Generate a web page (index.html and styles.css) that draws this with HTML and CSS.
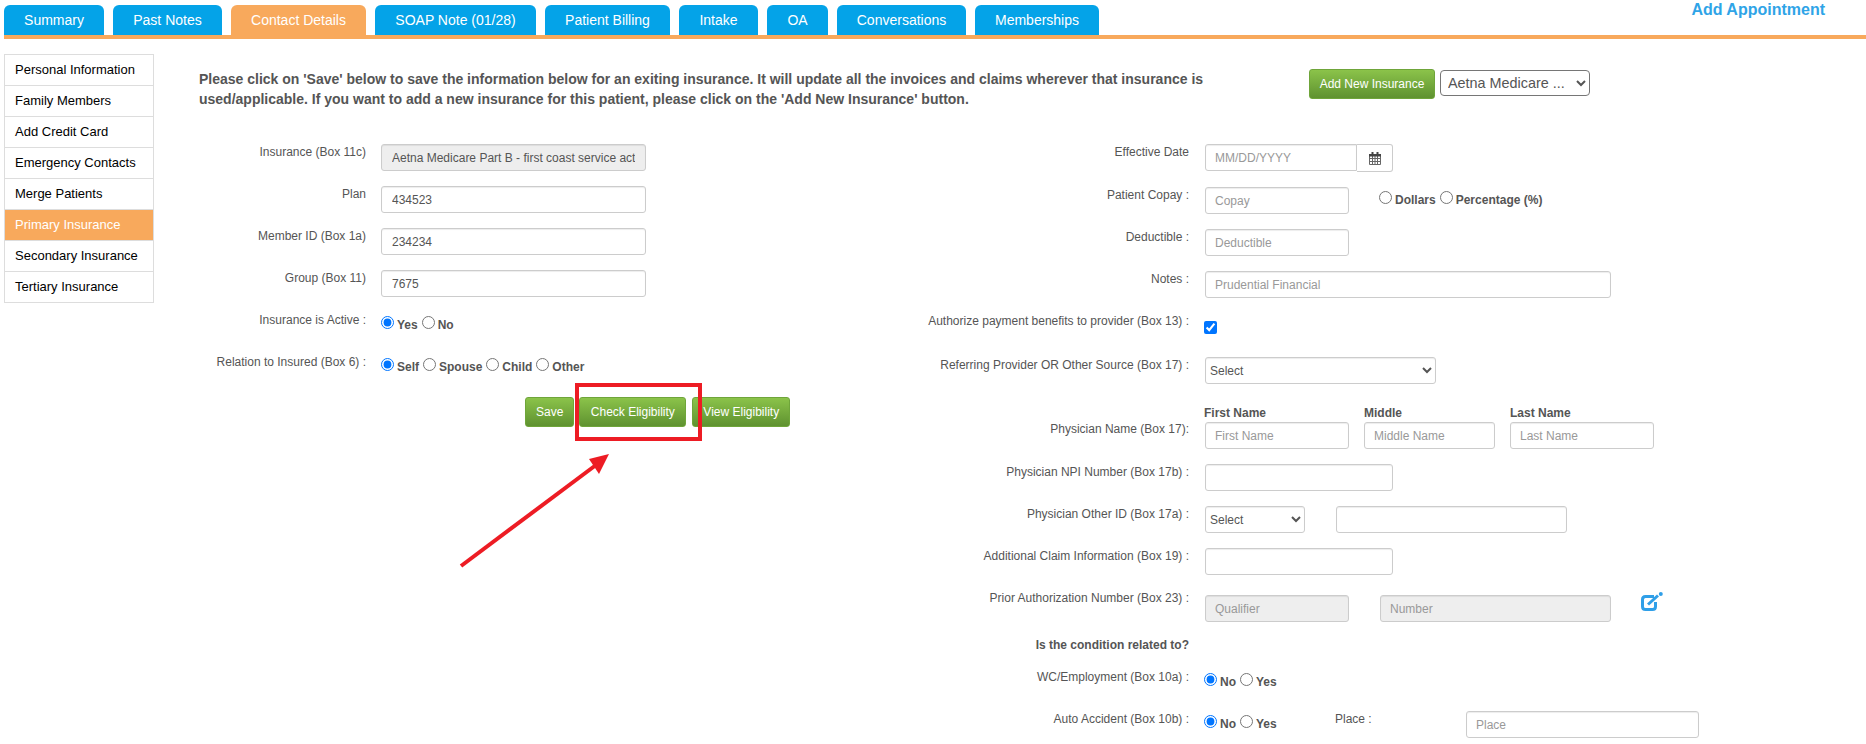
FILE: index.html
```html
<!DOCTYPE html>
<html lang="en">
<head>
    <meta charset="UTF-8">
    <title>Primary Insurance</title>
    <link rel="stylesheet" href="styles.css">
</head>
<body>
    <div class="top-bar">
        <div class="tabs">
            <a class="tab">Summary</a>
            <a class="tab">Past Notes</a>
            <a class="tab active">Contact Details</a>
            <a class="tab">SOAP Note (01/28)</a>
            <a class="tab">Patient Billing</a>
            <a class="tab">Intake</a>
            <a class="tab">OA</a>
            <a class="tab">Conversations</a>
            <a class="tab">Memberships</a>
        </div>
        <a class="add-appointment">Add Appointment</a>
    </div>

    <div class="layout">
        <ul class="side-nav">
            <li>Personal Information</li>
            <li>Family Members</li>
            <li>Add Credit Card</li>
            <li>Emergency Contacts</li>
            <li>Merge Patients</li>
            <li class="active">Primary Insurance</li>
            <li>Secondary Insurance</li>
            <li>Tertiary Insurance</li>
        </ul>

        <div class="content">
            <div class="intro">
                <p class="intro-text">Please click on 'Save' below to save the information below for an exiting insurance. It will update all the invoices and claims wherever that insurance is used/applicable. If you want to add a new insurance for this patient, please click on the 'Add New Insurance' button.</p>
                <button class="btn btn-add">Add New Insurance</button>
                <select class="insurance-select"><option>Aetna Medicare ...</option></select>
            </div>

            <div class="form">
                <div class="col-left">
                    <div class="row">
                        <label>Insurance (Box 11c)</label>
                        <input class="field w-265" value="Aetna Medicare Part B - first coast service act" disabled>
                    </div>
                    <div class="row">
                        <label>Plan</label>
                        <input class="field w-265" value="434523">
                    </div>
                    <div class="row">
                        <label>Member ID (Box 1a)</label>
                        <input class="field w-265" value="234234">
                    </div>
                    <div class="row">
                        <label>Group (Box 11)</label>
                        <input class="field w-265" value="7675">
                    </div>
                    <div class="row">
                        <label>Insurance is Active :</label>
                        <div class="radios">
                            <input type="radio" name="active" checked><b>Yes</b>
                            <input type="radio" name="active"><b>No</b>
                        </div>
                    </div>
                    <div class="row">
                        <label>Relation to Insured (Box 6) :</label>
                        <div class="radios">
                            <input type="radio" name="relation" checked><b>Self</b>
                            <input type="radio" name="relation"><b>Spouse</b>
                            <input type="radio" name="relation"><b>Child</b>
                            <input type="radio" name="relation"><b>Other</b>
                        </div>
                    </div>
                    <div class="actions">
                        <button class="btn">Save</button>
                        <button class="btn btn-check">Check Eligibility</button>
                        <button class="btn">View Eligibility</button>
                    </div>
                </div>

                <div class="col-right">
                    <div class="row row-first">
                        <label>Effective Date</label>
                        <div class="date-group">
                            <input class="field date-input" placeholder="MM/DD/YYYY">
                            <span class="date-addon">
                                <svg width="12" height="13" viewBox="0 0 12 13"><path fill="none" stroke="#666" d="M.5 3.500h11v9H.5zM.5 6.500h11M.5 9.500h11M3.500 4v9M6 4v9M8.500 4v9"/><path fill="#444" d="M0 2h12v2.500H0zM2.500 0h2v3h-2zM7.500 0h2v3h-2z"/></svg>
                            </span>
                        </div>
                    </div>
                    <div class="row">
                        <label>Patient Copay :</label>
                        <input class="field w-144" placeholder="Copay">
                        <div class="radios copay-type">
                            <input type="radio" name="copay"><b>Dollars</b>
                            <input type="radio" name="copay"><b>Percentage (%)</b>
                        </div>
                    </div>
                    <div class="row">
                        <label>Deductible :</label>
                        <input class="field w-144" placeholder="Deductible">
                    </div>
                    <div class="row">
                        <label>Notes :</label>
                        <input class="field w-406" placeholder="Prudential Financial">
                    </div>
                    <div class="row row-auth">
                        <label>Authorize payment benefits to provider (Box 13) :</label>
                        <input class="check" type="checkbox" checked>
                    </div>
                    <div class="row row-referring">
                        <label>Referring Provider OR Other Source (Box 17) :</label>
                        <select class="field w-231"><option>Select</option></select>
                    </div>
                    <div class="row row-physician">
                        <label>Physician Name (Box 17):</label>
                        <div class="names">
                            <div class="name-col">
                                <b>First Name</b>
                                <input class="field w-144" placeholder="First Name">
                            </div>
                            <div class="name-col">
                                <b>Middle</b>
                                <input class="field w-131" placeholder="Middle Name">
                            </div>
                            <div class="name-col">
                                <b>Last Name</b>
                                <input class="field w-144" placeholder="Last Name">
                            </div>
                        </div>
                    </div>
                    <div class="row">
                        <label>Physician NPI Number (Box 17b) :</label>
                        <input class="field w-188">
                    </div>
                    <div class="row">
                        <label>Physician Other ID (Box 17a) :</label>
                        <select class="field w-100"><option>Select</option></select>
                        <input class="field w-231 gap-31">
                    </div>
                    <div class="row">
                        <label>Additional Claim Information (Box 19) :</label>
                        <input class="field w-188">
                    </div>
                    <div class="row row-prior">
                        <label>Prior Authorization Number (Box 23) :</label>
                        <input class="field w-144" placeholder="Qualifier" disabled>
                        <input class="field w-231 gap-31" placeholder="Number" disabled>
                        <svg class="edit-icon" width="22" height="19" viewBox="0 0 22 19"><path fill="none" stroke="#2f9fe8" stroke-width="3" d="M13 4.500H4.500Q1.500 4.500 1.500 7.500v7q0 3 3 3h7q3 0 3-3V10"/><path fill="none" stroke="#2f9fe8" stroke-width="3" d="M7 12.500 17 3.500"/><circle cx="19.800" cy="2" r="2" fill="#2f9fe8"/></svg>
                    </div>
                    <div class="row row-condition">
                        <label class="strong">Is the condition related to?</label>
                    </div>
                    <div class="row">
                        <label>WC/Employment (Box 10a) :</label>
                        <div class="radios flush">
                            <input type="radio" name="wc" checked><b>No</b>
                            <input type="radio" name="wc"><b>Yes</b>
                        </div>
                    </div>
                    <div class="row">
                        <label>Auto Accident (Box 10b) :</label>
                        <div class="radios flush auto-radios">
                            <input type="radio" name="auto" checked><b>No</b>
                            <input type="radio" name="auto"><b>Yes</b>
                        </div>
                        <span class="place-label">Place :</span>
                        <input class="field w-233" placeholder="Place">
                    </div>
                </div>
            </div>
        </div>
    </div>

    <!-- annotation drawn over the screenshot -->
    <div class="callout-box"></div>
    <svg class="callout-arrow" width="170" height="130" viewBox="0 0 170 130">
        <path stroke="#ed1c24" stroke-width="4" d="M2 114 L137 13"/>
        <path fill="#ed1c24" d="M150 2 L140 22 L130 7z"/>
    </svg>
</body>
</html>
```

FILE: styles.css
```css
* {
    box-sizing: border-box;
}

html, body {
    margin: 0;
    overflow: hidden;
}

body {
    height: 744px;
    background: #fff;
    color: #555;
    font-family: "Liberation Sans", Arial, sans-serif;
    font-size: 12px;
}

.top-bar {
    display: flex;
    justify-content: space-between;
    height: 39px;
    margin-left: 4px;
    border-bottom: 4px solid #f8a95c;
}

.tabs {
    display: grid;
    grid-template-columns: 100px 109px 135px 161px 125px 79px 61px 129px 124px;
    gap: 9px;
    padding-top: 5px;
}

.tab {
    height: 30px;
    background: #04a3e8;
    border-radius: 6px 6px 0 0;
    color: #fff;
    font-size: 14px;
    line-height: 30px;
    text-align: center;
}

.tab.active {
    background: #f8a95c;
}

.add-appointment {
    margin-right: 41px;
    color: #2fa4e7;
    font-size: 16px;
    font-weight: bold;
    line-height: 20px;
}

.layout {
    display: flex;
    padding: 15px 0 0 4px;
}

.side-nav {
    width: 150px;
    height: 249px;
    margin: 0;
    padding: 0;
    list-style: none;
    border: 1px solid #ddd;
    flex-shrink: 0;
}

.side-nav li {
    height: 31px;
    padding-left: 10px;
    border-bottom: 1px solid #ddd;
    color: #000;
    font-size: 13px;
    line-height: 30px;
}

.side-nav li:last-child {
    border-bottom: 0;
}

.side-nav li.active {
    background: #f8a95c;
    color: #fff;
}

.content {
    flex: 1;
}

.intro {
    display: flex;
    align-items: flex-start;
    height: 90px;
    padding: 15px 0 0 45px;
}

.intro-text {
    width: 1060px;
    margin: 0 50px 0 0;
    font-size: 14px;
    font-weight: bold;
    line-height: 20px;
}

.btn {
    height: 30px;
    padding: 0 10px;
    background: linear-gradient(#8bc34a, #5f9230);
    border: 1px solid #6fa53a;
    border-radius: 3px;
    color: #fff;
    font-family: inherit;
    font-size: 12px;
}

.btn-add {
    width: 126px;
    padding: 0;
}

.btn-check {
    width: 107px;
    margin-right: 1px;
    padding: 0;
}

.insurance-select {
    width: 150px;
    height: 26px;
    margin: 1px 0 0 5px;
    padding: 0 3px;
    background: #fff;
    border: 1px solid #767676;
    border-radius: 4px;
    color: #555;
    font-family: inherit;
    font-size: 14.4px;
}

.form {
    display: flex;
}

.col-left {
    width: 746px;
}

.col-right {
    flex: 1;
}

.row {
    display: flex;
    height: 42px;
}

.row label {
    flex-shrink: 0;
    line-height: 16px;
    text-align: right;
    white-space: nowrap;
}

.col-left .row label {
    width: 212px;
    margin-right: 15px;
}

.col-right .row label {
    width: 289px;
    margin-right: 16px;
}

.row label.strong {
    font-weight: bold;
}

.field {
    height: 27px;
    padding: 0 10px;
    background: #fff;
    border: 1px solid #ccc;
    border-radius: 3px;
    box-shadow: inset 0 1px 1px rgba(0, 0, 0, 0.075);
    color: #555;
    font-family: inherit;
    font-size: 12px;
}

.col-right .field {
    padding: 0 9px;
}

.field::placeholder {
    color: #999;
}

.field:disabled {
    background: #eee;
    color: #555;
}

.col-right select.field {
    padding: 0;
}

.w-100 { width: 100px; }
.w-131 { width: 131px; }
.w-144 { width: 144px; }
.w-188 { width: 188px; }
.w-231 { width: 231px; }
.w-233 { width: 233px; }
.w-265 { width: 265px; }
.w-406 { width: 406px; }

.gap-31 {
    margin-left: 31px;
}

.radios {
    display: flex;
    align-items: flex-start;
    height: 20px;
    line-height: 16px;
    padding-top: 3px;
}

.radios input {
    width: 13px;
    height: 13px;
    margin: 1px 3px 0 0;
}

.radios b {
    margin: 2px 4px 0 0;
}

.radios.flush {
    margin-left: -1px;
}

.actions {
    display: flex;
    gap: 5px;
    margin-top: 1px;
    padding-left: 371px;
}

.row-first {
    height: 43px;
}

.date-group {
    display: flex;
    width: 188px;
    height: 28px;
}

.date-input {
    width: 152px;
    border-radius: 3px 0 0 3px;
}

.date-addon {
    display: flex;
    align-items: center;
    justify-content: center;
    width: 36px;
    border: 1px solid #ccc;
    border-left: 0;
    border-radius: 0 3px 3px 0;
}

.copay-type {
    margin-left: 30px;
}

.row-auth {
    height: 44px;
}

.check {
    width: 13px;
    height: 13px;
    margin: 8px 0 0 -1px;
}

.row-referring {
    height: 48px;
}

.row-physician {
    height: 59px;
}

.row-physician label {
    padding-top: 16px;
}

.names {
    display: flex;
    gap: 15px;
}

.name-col {
    display: flex;
    flex-direction: column;
    gap: 1px;
}

.name-col b {
    line-height: 16px;
}

.name-col:first-child b {
    margin-left: -1px;
}

.row-prior {
    height: 47px;
}

.row-prior .field {
    margin-top: 5px;
}

.edit-icon {
    margin: 2px 0 0 30px;
}

.row-condition {
    height: 32px;
}

.auto-radios {
    width: 131px;
}

.place-label {
    width: 131px;
    line-height: 16px;
}

.callout-box {
    position: absolute;
    left: 575px;
    top: 383px;
    width: 127px;
    height: 58px;
    border: 4px solid #ed1c24;
}

.callout-arrow {
    position: absolute;
    left: 459px;
    top: 452px;
}
```
